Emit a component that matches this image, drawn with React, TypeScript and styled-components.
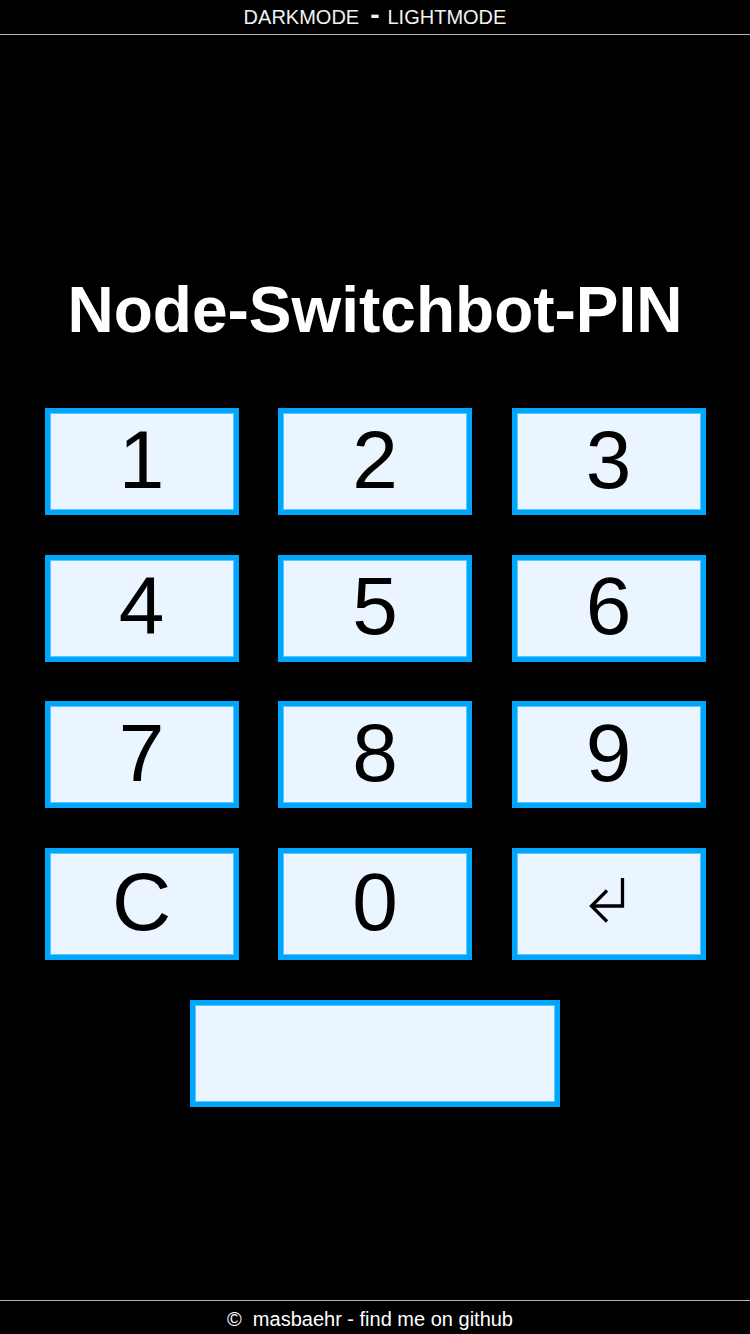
import React from "react";
import styled, { createGlobalStyle } from "styled-components";

const GlobalStyle = createGlobalStyle`
  html, body {
    margin: 0;
    padding: 0;
    background: #000;
  }
  body {
    font-family: "Liberation Sans", Arial, sans-serif;
    color: #fff;
  }
`;

const Page = styled.div`
  min-height: 100vh;
  display: flex;
  flex-direction: column;
  background: #000;
`;

const Header = styled.header`
  height: 35px;
  box-sizing: border-box;
  padding-top: 6px;
  border-bottom: 1px solid #b4b4b4;
  display: flex;
  justify-content: center;
  align-items: flex-start;
  font-size: 20px;
  line-height: 23px;
  color: #f2f2f2;
`;

const ModeLink = styled.a`
  color: #f2f2f2;
  text-decoration: none;
  cursor: pointer;
`;

const Sep = styled.span`
  font-weight: bold;
  font-size: 28px;
  line-height: 17px;
  margin: 0 8px 0 11px;
  align-self: flex-start;
`;

const Main = styled.main`
  flex: 1;
  display: flex;
  flex-direction: column;
  align-items: center;
  padding-top: 238px;
`;

const Title = styled.h1`
  margin: 0;
  font-size: 64px;
  line-height: 74px;
  font-weight: bold;
  color: #fff;
`;

const Keypad = styled.div`
  margin-top: 61px;
  display: grid;
  grid-template-columns: repeat(3, 194px);
  grid-template-rows: 107px 107px 107px 112px;
  column-gap: 39.5px;
  row-gap: 39.7px;
`;

const Key = styled.button`
  box-sizing: border-box;
  margin: 0;
  padding: 0 0 4px;
  border: 5px solid #00a6fc;
  box-shadow: inset 0 0 0 1px #5cc6ff;
  background: #ebf5ff;
  color: #000;
  font-family: "Liberation Sans", Arial, sans-serif;
  font-size: 82px;
  display: flex;
  align-items: center;
  justify-content: center;
  cursor: pointer;
`;

const EnterIcon = styled.svg`
  width: 36px;
  height: 47px;
  margin: 0 4px 5px 0;
`;

const Display = styled.div`
  margin-top: 40px;
  box-sizing: border-box;
  width: 370px;
  height: 107px;
  border: 5px solid #00a6fc;
  box-shadow: inset 0 0 0 1px #5cc6ff;
  background: #ebf5ff;
`;

const Footer = styled.footer`
  height: 34px;
  box-sizing: border-box;
  border-top: 1px solid #b4b4b4;
  padding: 7px 10px 0 0;
  text-align: center;
  font-size: 20px;
  line-height: 23px;
  color: #fff;
`;

const keys = ["1", "2", "3", "4", "5", "6", "7", "8", "9", "C", "0"];

export default function App() {
  return (
    <>
      <GlobalStyle />
      <Page>
        <Header>
          <ModeLink>DARKMODE</ModeLink>
          <Sep>-</Sep>
          <ModeLink>LIGHTMODE</ModeLink>
        </Header>
        <Main>
          <Title>Node-Switchbot-PIN</Title>
          <Keypad>
            {keys.map((k) => (
              <Key key={k}>{k}</Key>
            ))}
            <Key aria-label="Enter">
              <EnterIcon viewBox="0 0 36 47" fill="none" stroke="#000" strokeWidth="3.3">
                <path d="M33.5 2 V30 H3" />
                <path d="M18 14.5 L2.5 30 L18 45.5" />
              </EnterIcon>
            </Key>
          </Keypad>
          <Display />
        </Main>
        <Footer>©&nbsp; masbaehr - find me on github</Footer>
      </Page>
    </>
  );
}
